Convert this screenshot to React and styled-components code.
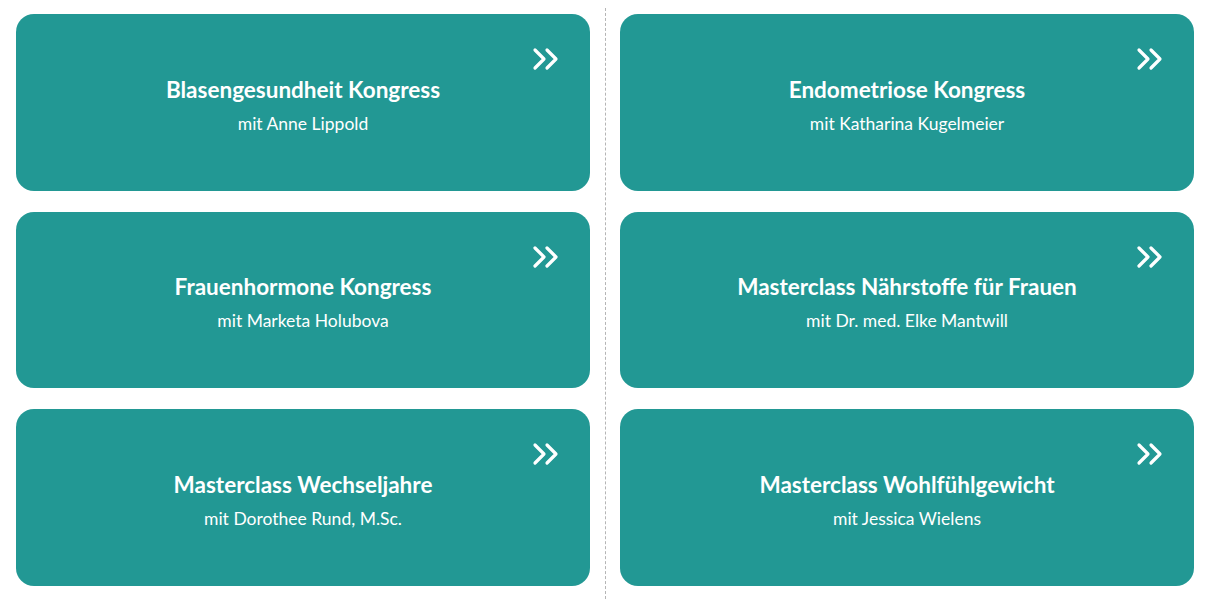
import React from 'react'
import styled, { createGlobalStyle } from 'styled-components'

const GlobalStyle = createGlobalStyle`
  body {
    margin: 0;
    background: #fff;
    font-family: 'Lato', 'Noto Sans', sans-serif;
  }
`

const courses = [
  { title: 'Blasengesundheit Kongress', host: 'mit Anne Lippold' },
  { title: 'Endometriose Kongress', host: 'mit Katharina Kugelmeier' },
  { title: 'Frauenhormone Kongress', host: 'mit Marketa Holubova' },
  { title: 'Masterclass Nährstoffe für Frauen', host: 'mit Dr. med. Elke Mantwill' },
  { title: 'Masterclass Wechseljahre', host: 'mit Dorothee Rund, M.Sc.' },
  { title: 'Masterclass Wohlfühlgewicht', host: 'mit Jessica Wielens' },
]

const Chevrons = () => (
  <svg width="28" height="24" viewBox="0 0 28 24" fill="none" stroke="#fff"
    strokeWidth="3.2" strokeLinecap="round" strokeLinejoin="round">
    <polyline points="3,3 12,12 3,21" />
    <polyline points="15,3 24,12 15,21" />
  </svg>
)

const App = () => {
  const left = courses.filter((_, i) => i % 2 === 0)
  const right = courses.filter((_, i) => i % 2 === 1)
  return (
    <>
      <GlobalStyle />
      <Page>
        <Column>
          {left.map(c => <Card key={c.title} {...c} />)}
        </Column>
        <Divider />
        <Column>
          {right.map(c => <Card key={c.title} {...c} />)}
        </Column>
      </Page>
    </>
  )
}

const Card = ({ title, host }) => (
  <Tile>
    <Arrow><Chevrons /></Arrow>
    <Title>{title}</Title>
    <Host>{host}</Host>
  </Tile>
)

export default App

const Page = styled.div`
  display: grid;
  grid-template-columns: 574px 30px 574px;
  padding: 0 14px 0 16px;
  height: 599px;
  box-sizing: border-box;
`
const Column = styled.div`
  display: flex;
  flex-direction: column;
  gap: 21px;
  padding-top: 14px;
`
const Divider = styled.div`
  margin: 8px auto 0;
  width: 0;
  border-left: 1px dashed #b5b5b5;
`
const Tile = styled.div`
  position: relative;
  height: 176.5px;
  border-radius: 18px;
  background: #229894;
  color: #fff;
  display: flex;
  flex-direction: column;
  align-items: center;
  justify-content: center;
  padding-top: 6px;
  box-sizing: border-box;
`
const Arrow = styled.div`
  position: absolute;
  top: 33px;
  right: 30px;
  line-height: 0;
`
const Title = styled.div`
  font-weight: 700;
  font-size: 22.5px;
  line-height: 28px;
`
const Host = styled.div`
  font-size: 17.5px;
  line-height: 22px;
  margin-top: 9px;
`
